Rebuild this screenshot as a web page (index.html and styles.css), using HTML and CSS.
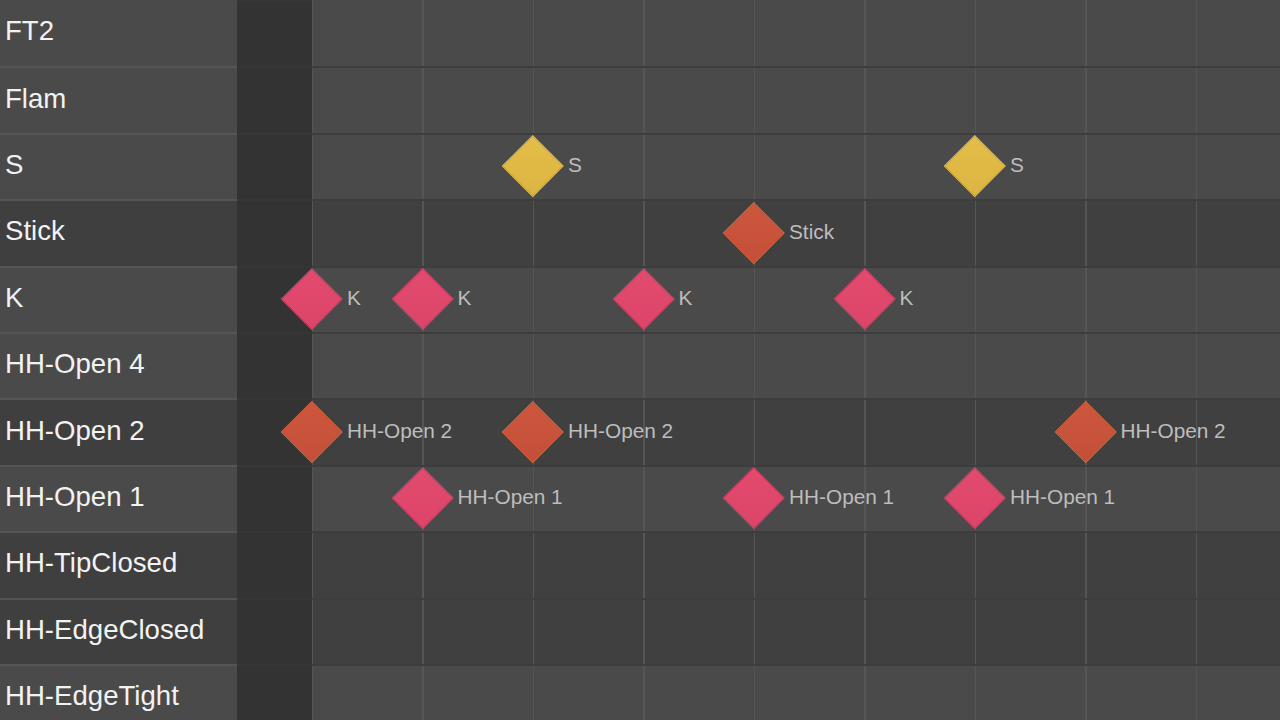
FILE: index.html
```html
<!DOCTYPE html>
<html>
<head>
<meta charset="utf-8">
<link rel="stylesheet" href="styles.css">
</head>
<body>
<div class="editor">
  <div class="row light"><div class="name">FT2</div><div class="gutter"></div><div class="lane"></div></div>
  <div class="row light"><div class="name">Flam</div><div class="gutter"></div><div class="lane"></div></div>
  <div class="row light"><div class="name">S</div><div class="gutter"></div><div class="lane">
    <div class="note yellow" style="--beat:2"><span class="gem"><i></i></span><span class="tag">S</span></div>
    <div class="note yellow" style="--beat:6"><span class="gem"><i></i></span><span class="tag">S</span></div>
  </div></div>
  <div class="row dark"><div class="name">Stick</div><div class="gutter"></div><div class="lane">
    <div class="note orange" style="--beat:4"><span class="gem"><i></i></span><span class="tag">Stick</span></div>
  </div></div>
  <div class="row light"><div class="name">K</div><div class="gutter"></div><div class="lane">
    <div class="note pink" style="--beat:0"><span class="gem"><i></i></span><span class="tag">K</span></div>
    <div class="note pink" style="--beat:1"><span class="gem"><i></i></span><span class="tag">K</span></div>
    <div class="note pink" style="--beat:3"><span class="gem"><i></i></span><span class="tag">K</span></div>
    <div class="note pink" style="--beat:5"><span class="gem"><i></i></span><span class="tag">K</span></div>
  </div></div>
  <div class="row light"><div class="name">HH-Open 4</div><div class="gutter"></div><div class="lane"></div></div>
  <div class="row dark"><div class="name">HH-Open 2</div><div class="gutter"></div><div class="lane">
    <div class="note orange" style="--beat:0"><span class="gem"><i></i></span><span class="tag">HH-Open 2</span></div>
    <div class="note orange" style="--beat:2"><span class="gem"><i></i></span><span class="tag">HH-Open 2</span></div>
    <div class="note orange" style="--beat:7"><span class="gem"><i></i></span><span class="tag">HH-Open 2</span></div>
  </div></div>
  <div class="row light"><div class="name">HH-Open 1</div><div class="gutter"></div><div class="lane">
    <div class="note pink" style="--beat:1"><span class="gem"><i></i></span><span class="tag">HH-Open 1</span></div>
    <div class="note pink" style="--beat:4"><span class="gem"><i></i></span><span class="tag">HH-Open 1</span></div>
    <div class="note pink" style="--beat:6"><span class="gem"><i></i></span><span class="tag">HH-Open 1</span></div>
  </div></div>
  <div class="row dark"><div class="name">HH-TipClosed</div><div class="gutter"></div><div class="lane"></div></div>
  <div class="row dark"><div class="name">HH-EdgeClosed</div><div class="gutter"></div><div class="lane"></div></div>
  <div class="row light"><div class="name">HH-EdgeTight</div><div class="gutter"></div><div class="lane"></div></div>
</div>
</body>
</html>
```
FILE: styles.css
```css
html, body {
  margin: 0;
  padding: 0;
  background: #333333;
  overflow: hidden;
}
body {
  width: 1280px;
  height: 720px;
  font-family: "Liberation Sans", Arial, sans-serif;
}
.editor {
  display: flex;
  flex-direction: column;
}
.row {
  display: flex;
  height: 66.4px;
  flex: 0 0 66.4px;
}
.name {
  width: 237px;
  flex: 0 0 237px;
  box-sizing: border-box;
  padding: 0 0 4px 5px;
  display: flex;
  align-items: center;
  color: #f2f2f2;
  font-size: 27.6px;
  border-top: 2px solid #555555;
}
.row:first-child .name,
.row:first-child .lane {
  border-top: none;
}
.gutter {
  width: 75px;
  flex: 0 0 75px;
  background: #333333;
  border-top: 2px solid #363636;
  box-sizing: border-box;
}
.lane {
  flex: 1;
  position: relative;
  box-sizing: border-box;
  border-top: 2px solid #3d3d3d;
  background-image: repeating-linear-gradient(90deg, #555555 0, #555555 1.2px, transparent 1.2px, transparent 110.5px);
}
.light .name { background: #4a4a4a; }
.dark .name { background: #3f3f3f; }
.light .lane { background-color: #4a4a4a; }
.dark .lane { background-color: #404040; }

.note {
  position: absolute;
  top: 50%;
  left: calc(var(--beat) * 110.5px - 31px);
  height: 62px;
  margin-top: -32px;
  display: flex;
  align-items: center;
  z-index: 2;
}
.gem {
  width: 62px;
  height: 62px;
  display: flex;
  align-items: center;
  justify-content: center;
  flex: 0 0 62px;
}
.gem i {
  display: block;
  width: 43.5px;
  height: 43.5px;
  flex: 0 0 43.5px;
  box-sizing: border-box;
  transform: rotate(45deg);
}
.tag {
  margin-left: 4px;
  color: #bdbdbd;
  font-size: 20.8px;
  white-space: nowrap;
  padding-bottom: 1px;
}
.pink .gem i {
  background: linear-gradient(135deg, #e24a6e, #dc4469);
  border: 1px solid #d9426a;
}
.orange .gem i {
  background: linear-gradient(135deg, #cd573d, #c44f39);
  border: 1.5px solid #e3663a;
}
.yellow .gem i {
  background: linear-gradient(135deg, #e4be47, #dcb443);
  border: 1px solid #e8c24c;
}
```
